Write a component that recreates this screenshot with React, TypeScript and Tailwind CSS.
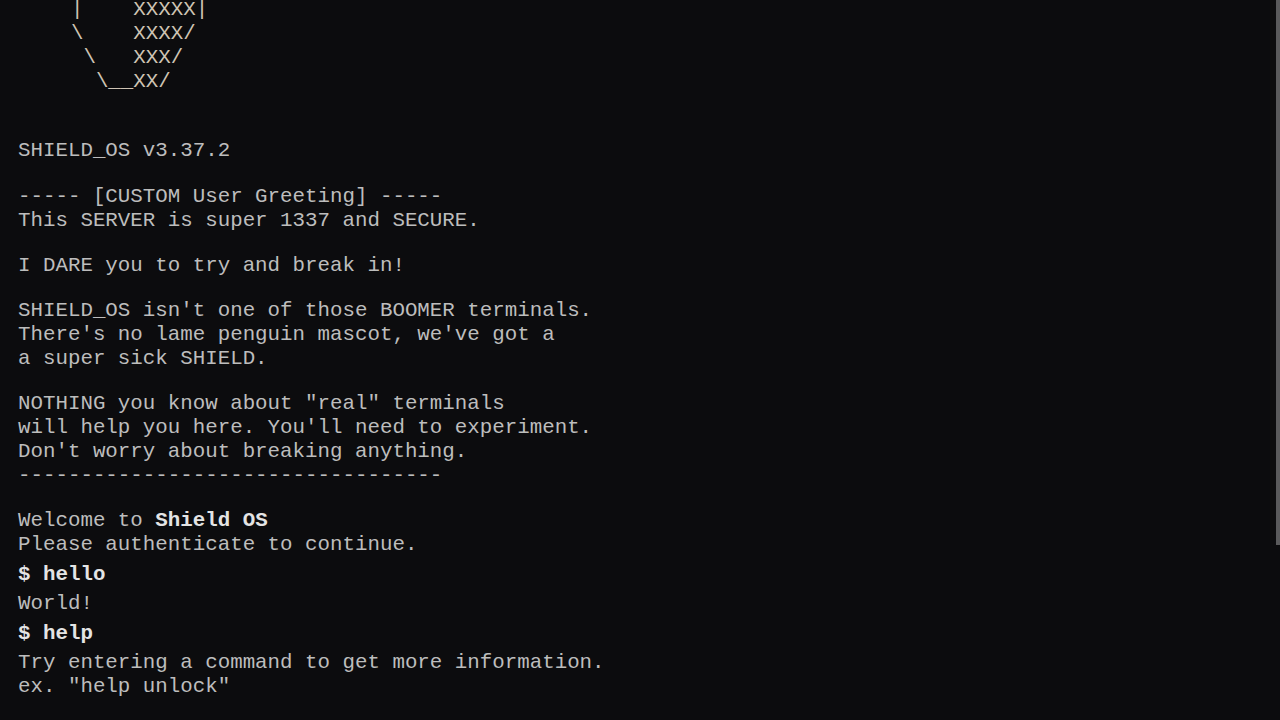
const ART = [
  '    |    XXXXX|',
  '    \\    XXXX/',
  '     \\   XXX/',
  '      \\__XX/',
];

const INTRO: string[][] = [
  ['----- [CUSTOM User Greeting] -----', 'This SERVER is super 1337 and SECURE.'],
  ['I DARE you to try and break in!'],
  [
    "SHIELD_OS isn't one of those BOOMER terminals.",
    "There's no lame penguin mascot, we've got a",
    'a super sick SHIELD.',
  ],
  [
    'NOTHING you know about "real" terminals',
    "will help you here. You'll need to experiment.",
    "Don't worry about breaking anything.",
    '----------------------------------',
  ],
];

const HISTORY = [
  { cmd: 'hello', out: ['World!'] },
  { cmd: 'help', out: ['Try entering a command to get more information.', 'ex. "help unlock"'] },
];

const Terminal = () => {
  return (
    <div className="flex-1 overflow-hidden pl-[18px] text-[20.8px] leading-[24px] text-[#bdbdbd] font-['Liberation_Mono','Courier_New',monospace]">
      <pre className="mt-[-2px] pl-[3px] whitespace-pre text-[#cfc4b4] font-['Liberation_Mono','Courier_New',monospace]">
        {ART.join('\n')}
      </pre>

      <div className="mt-[45px]">SHIELD_OS v3.37.2</div>

      <div className="mt-[22px] flex flex-col gap-[21px]">
        {INTRO.map((block, i) => (
          <div key={i}>
            {block.map((line, j) => (
              <div key={j} className="whitespace-pre">
                {line}
              </div>
            ))}
          </div>
        ))}
      </div>

      <div className="mt-[21px]">
        <div>
          Welcome to <span className="font-bold text-[#e4e4e4]">Shield OS</span>
        </div>
        <div>Please authenticate to continue.</div>
      </div>

      {HISTORY.map(h => (
        <div key={h.cmd}>
          <div className="pt-[6px] pb-[5px] font-bold text-[#e4e4e4]">$ {h.cmd}</div>
          {h.out.map((line, j) => (
            <div key={j} className="whitespace-pre">
              {line}
            </div>
          ))}
        </div>
      ))}
    </div>
  );
};

export default function App() {
  return (
    <div className="flex h-[720px] w-full overflow-hidden bg-[#0c0c0e]">
      <Terminal />
      <div className="w-[4px] shrink-0 bg-[#0c0c0e]">
        <div className="h-[545px] w-full bg-[#5a5a5c]" />
      </div>
    </div>
  );
}
